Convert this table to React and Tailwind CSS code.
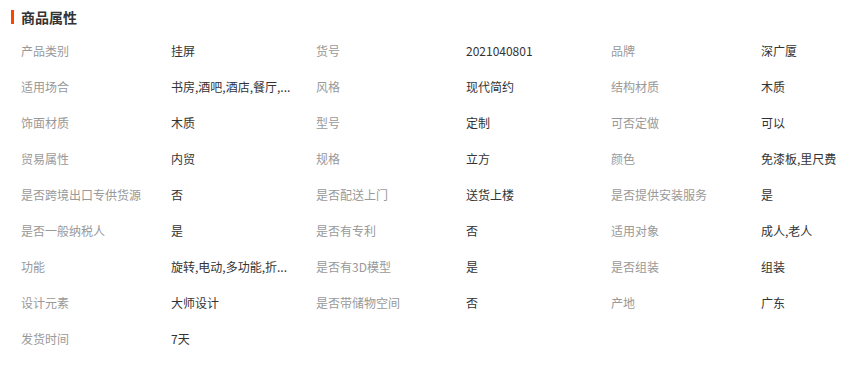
const rows = [
  ['产品类别', '挂屏', '货号', '2021040801', '品牌', '深广厦'],
  ['适用场合', '书房,酒吧,酒店,餐厅,...', '风格', '现代简约', '结构材质', '木质'],
  ['饰面材质', '木质', '型号', '定制', '可否定做', '可以'],
  ['贸易属性', '内贸', '规格', '立方', '颜色', '免漆板,里尺费'],
  ['是否跨境出口专供货源', '否', '是否配送上门', '送货上楼', '是否提供安装服务', '是'],
  ['是否一般纳税人', '是', '是否有专利', '否', '适用对象', '成人,老人'],
  ['功能', '旋转,电动,多功能,折...', '是否有3D模型', '是', '是否组装', '组装'],
  ['设计元素', '大师设计', '是否带储物空间', '否', '产地', '广东'],
  ['发货时间', '7天'],
];

export default function App() {
  return (
    <div className="h-[366px] w-[863px] bg-white font-['Microsoft_YaHei','Noto_Sans_CJK_SC',sans-serif] text-[12px]">
      <div className="flex h-[33px] items-center pl-[11px]">
        <span className="mr-[7px] h-[14px] w-[3px] bg-[#ff4400]" />
        <h2 className="text-[14px] font-bold leading-none text-[#333]">商品属性</h2>
      </div>
      <div className="pl-[21px]">
        {rows.map((r, i) => (
          <div key={i} className="grid h-[36px] grid-cols-[150px_145px_150px_145px_150px_1fr] items-center">
            {r.map((cell, j) => (
              <div
                key={j}
                className={j % 2 === 0 ? 'whitespace-nowrap text-[#999]' : 'whitespace-nowrap text-[#333]'}
              >
                {cell}
              </div>
            ))}
          </div>
        ))}
      </div>
    </div>
  );
}
